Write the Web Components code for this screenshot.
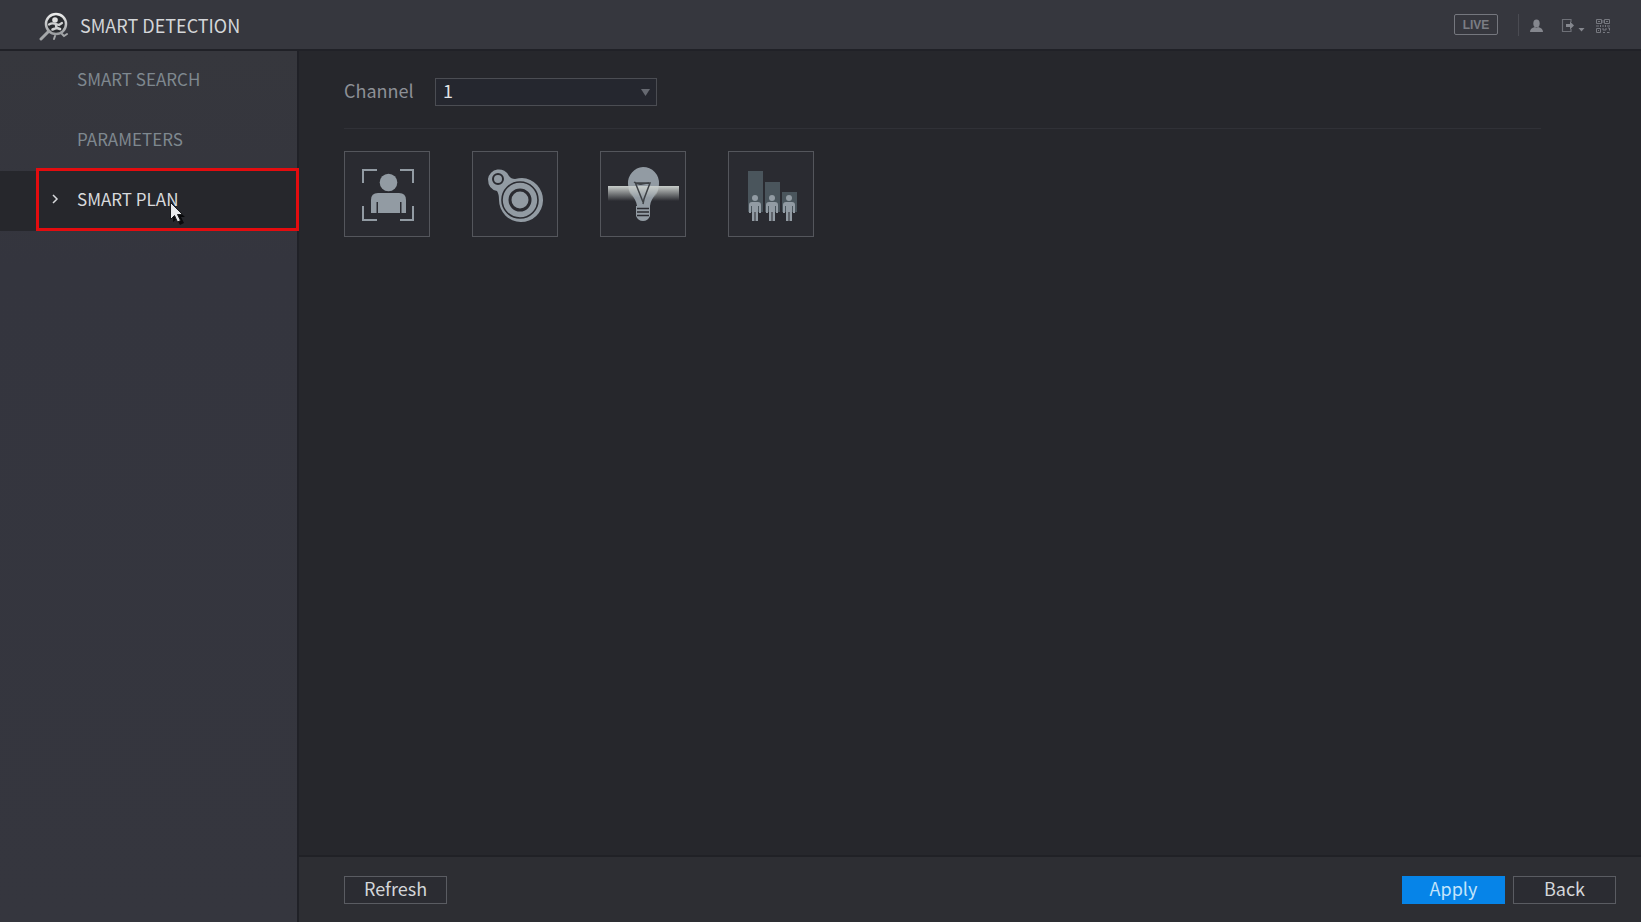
<!DOCTYPE html>
<html lang="en">
<head>
<meta charset="utf-8">
<title>Smart Detection</title>
<style>
  html, body {
    height: 100%;
    margin: 0;
  }
  body {
    background: #26272c;
    color: #d4d6d9;
    font: 18px/26px "Noto Sans CJK SC", "Noto Sans", sans-serif;
    --line: #5a5c62;
    --muted: #7f888f;
    --icon: #929ba3;
  }
</style>
</head>
<body>
<app-shell>
  <app-header slot="header" title-text="SMART DETECTION"></app-header>
  <side-nav slot="nav">
    <nav-item>SMART SEARCH</nav-item>
    <nav-item>PARAMETERS</nav-item>
    <nav-item active>SMART PLAN</nav-item>
  </side-nav>
  <channel-select label="Channel"></channel-select>
  <plan-list>
    <plan-tile type="face" label="Face detection"></plan-tile>
    <plan-tile type="ivs" label="IVS"></plan-tile>
    <plan-tile type="light" label="Video structuring"></plan-tile>
    <plan-tile type="count" label="People counting"></plan-tile>
  </plan-list>
  <app-button slot="footer">Refresh</app-button>
  <app-button slot="footer-end" type="primary">Apply</app-button>
  <app-button slot="footer-end">Back</app-button>
</app-shell>

<script>
const icons = {
  face: `
    <g fill="none" stroke="var(--icon)" stroke-width="2">
      <path d="M19 32V19h14M56 19h13v13M19 55v14h14M56 69h13V55"/>
    </g>
    <circle cx="44.500" cy="31.500" r="8.800"/>
    <path d="M27 62V49q0-7 7-7h21q7 0 7 7v13h-4.500V51h-1.500v11H34V51h-1.500v11z"/>`,
  ivs: `
    <path d="M16 28a11 11 0 0 1 21-3q2 3 6 3 4-1 7-1a22 22 0 1 1-23 22q0-6-2-9-9-2-9-12z"/>
    <g fill="none" stroke="#2a2b31">
      <circle cx="26" cy="28" r="5" stroke-width="2"/>
      <circle cx="48" cy="49" r="18" stroke-width="1.600"/>
      <circle cx="48" cy="49" r="10" stroke-width="3"/>
    </g>`,
  light: `
    <defs>
      <linearGradient id="beam" x1="0" y1="0" x2="0" y2="1">
        <stop offset="0" stop-color="#c9cecb"/>
        <stop offset="1" stop-color="#c9cecb" stop-opacity="0"/>
      </linearGradient>
    </defs>
    <path d="M8 35h71v15H8z" fill="url(#beam)"/>
    <path d="M43 16a16 16 0 0 1 16 17c0 9-8 13-9 22H37c-1-9-9-13-9-22a16 16 0 0 1 15-17z"/>
    <path d="M36 55h14v10q-2 5-7 5t-7-5z"/>
    <path d="M28 35h31q-1 7-5 12H33q-4-5-5-12z" fill="url(#beam)"/>
    <path d="M37 57.500h12M37 61h12M37 64.500h12" stroke="#2a2b31" stroke-width="1.500"/>
    <path d="M34 31q4 3 8 2t8-1l-6 16-1 5M35 31l8 20M35 32h14" fill="none" stroke="#3e4246" stroke-width="1.500"/>`,
  count: `
    <path fill="#4a555c" d="M20 20h15v41H20zM37 31h15v30H37zM54 41h15v20H54z"/>
    ${[27, 44, 61].map(x => `
      <g transform="translate(${x} 0)">
        <circle cy="47" r="3"/>
        <path d="M-6 62v-8q0-3 3-3h6q3 0 3 3v8H4v-7H3v15H.5V61h-1v9H-3V55h-1v7z"/>
      </g>`).join('')}`,
}

class AppShell extends HTMLElement {
  constructor() {
    super()
    this.attachShadow({ mode: 'open' })
    this.shadowRoot.innerHTML = `
      <style>
        :host {
          display: grid;
          grid-template: auto 1fr / 299px 1fr;
          min-height: 100vh;
        }
        header {
          grid-column: 1 / 3;
        }
        nav {
          background: linear-gradient(#36373d, #34353e 25%, #35363e);
          border-right: 2px solid #202127;
          box-sizing: border-box;
        }
        main {
          display: flex;
          flex-direction: column;
          min-width: 0;
        }
        .content {
          flex: 1;
          padding: 27px 100px 27px 45px;
        }
        footer {
          display: flex;
          gap: 8px;
          padding: 19px 25px 18px 45px;
          background: #2d2e33;
          border-top: 2px solid #202126;
        }
        .spacer {
          flex: 1;
        }
      </style>
      <header><slot name="header"></slot></header>
      <nav><slot name="nav"></slot></nav>
      <main>
        <div class="content"><slot></slot></div>
        <footer>
          <slot name="footer"></slot>
          <span class="spacer"></span>
          <slot name="footer-end"></slot>
        </footer>
      </main>
    `
  }
}

class AppHeader extends HTMLElement {
  constructor() {
    super()
    this.attachShadow({ mode: 'open' })
    this.shadowRoot.innerHTML = `
      <style>
        :host {
          display: flex;
          align-items: center;
          height: 49px;
          padding: 0 31px 0 38px;
          background: #36373e;
          border-bottom: 2px solid #202127;
        }
        .logo {
          width: 32px;
          height: 32px;
          margin-right: 10px;
        }
        h1 {
          flex: 1;
          margin: 0;
          font-size: 18px;
          font-weight: 400;
        }
        button {
          display: flex;
          align-items: center;
          padding: 0;
          border: 0;
          background: none;
          color: #7b7d84;
        }
        .live {
          justify-content: center;
          width: 44px;
          height: 21px;
          border: 1px solid #75777e;
          border-radius: 2px;
          font: bold 12px/18px "Liberation Sans", Arial, sans-serif;
        }
        .tools {
          display: flex;
          align-items: center;
          height: 20px;
          margin-left: 20px;
          padding: 2px 0 0 10px;
          border-left: 1px solid #4a4b52;
        }
        .exit {
          margin: 0 11px 0 17px;
        }
      </style>
      <svg class="logo" viewBox="0 0 32 32" aria-hidden="true">
        <defs>
          <linearGradient id="metal" x1="0" y1="0" x2="0" y2="1">
            <stop offset="0" stop-color="#ececec"/>
            <stop offset="1" stop-color="#9b9da0"/>
          </linearGradient>
        </defs>
        <circle cx="18" cy="15" r="10" fill="#292b2f" stroke="url(#metal)" stroke-width="2.500"/>
        <path d="M11 22L3 30" stroke="#a5a7a9" stroke-width="3" stroke-linecap="round"/>
        <circle cx="17" cy="11" r="2.800" fill="#e0e0e0"/>
        <path d="M11 15.500q3-2 7-.5l3 1 3-2" fill="none" stroke="#d0d1d2" stroke-width="2.200" stroke-linecap="round"/>
        <path d="M18 15.500l.5 3.500-4 1.500M19 19l3 1" fill="none" stroke="#d0d1d2" stroke-width="2.600" stroke-linecap="round"/>
        <path d="M17 27l-1 3M24 25l2 2 3-2" fill="none" stroke="#a5a7a9" stroke-width="2" stroke-linecap="round"/>
      </svg>
      <h1>${this.getAttribute('title-text') || ''}</h1>
      <button class="live">LIVE</button>
      <div class="tools">
        <button aria-label="User">
          <svg width="15" height="14" viewBox="0 0 15 14" fill="#85878e">
            <ellipse cx="7.500" cy="4.500" rx="3.200" ry="4"/>
            <path d="M1 13q0-4 5-5l1.500 1L9 8q5 1 5 5z"/>
          </svg>
        </button>
        <button class="exit" aria-label="Log out">
          <svg width="24" height="16" viewBox="0 0 24 16" fill="#85878e">
            <path d="M10 4V1.500H1.500v12H10V11" fill="none" stroke="#6e7077" stroke-width="1.200"/>
            <path d="M5 6h4V3.500L13 7.500l-4 4V9H5zM17.500 10h6l-3 3.500z"/>
          </svg>
        </button>
        <button aria-label="QR code">
          <svg width="14" height="14" viewBox="0 0 14 14" fill="none" stroke="#777980">
            <path d="M.5.5h5v4h-5zM8.500.5h5v4h-5zM.5 9.500h4v4h-4zM2 2.500h2M10 2.500h2M2 11.500h1M0 7h3M4.500 6v2M6 7h2M7 1v3M9.500 6v2M11 7h3M7 9v2h3V9M12 9h1.500v2.500M7 13.500h2M11 13.500h2.500"/>
          </svg>
        </button>
      </div>
    `
  }
}

class SideNav extends HTMLElement {
  constructor() {
    super()
    this.attachShadow({ mode: 'open' })
    this.shadowRoot.innerHTML = `
      <style>
        :host {
          display: flex;
          flex-direction: column;
          font-size: 17px;
        }
      </style>
      <slot></slot>
    `
  }
}

class NavItem extends HTMLElement {
  constructor() {
    super()
    this.attachShadow({ mode: 'open' })
    this.shadowRoot.innerHTML = this.render()
  }

  render() {
    return `
      <style>
        :host {
          display: block;
          position: relative;
        }
        a {
          display: flex;
          align-items: center;
          box-sizing: border-box;
          height: 60px;
          padding: 0 0 4px 50px;
          color: var(--muted);
          text-decoration: none;
        }
        .arrow {
          width: 10px;
          height: 12px;
          margin-right: 17px;
          visibility: hidden;
        }
        :host([active]) a {
          background: #26272c;
          color: #d8dadd;
        }
        :host([active]) .arrow {
          visibility: visible;
        }
        /* marker frame and pointer lie over the active row */
        .frame {
          position: absolute;
          inset: -3px -2px 0 36px;
          border: 3px solid #e30c0f;
          pointer-events: none;
        }
        .pointer {
          position: absolute;
          left: 169px;
          top: 30px;
          width: 18px;
          height: 24px;
          pointer-events: none;
        }
      </style>
      <a href="#">
        <svg class="arrow" viewBox="0 0 10 12" fill="none" stroke="#d8dadd" stroke-width="1.500">
          <path d="M3 2l4 4-4 4"/>
        </svg>
        <slot></slot>
      </a>
      ${this.hasAttribute('active') ? this._buildMarker() : ''}
    `
  }

  _buildMarker() {
    return `
      <div class="frame"></div>
      <svg class="pointer" viewBox="0 0 18 24" aria-hidden="true">
        <path d="M4 5v16l4-3 3 6 4-2-3-6h4z" fill="#08090b"/>
        <path d="M1.500 1.500v17l4-4 3 6.500 3-1.500-3-6h5z" fill="#e9eaec" stroke="#18191c" stroke-width="1"/>
      </svg>
    `
  }
}

class ChannelSelect extends HTMLElement {
  constructor() {
    super()
    this.attachShadow({ mode: 'open' })
    this.shadowRoot.innerHTML = `
      <style>
        :host {
          display: flex;
          align-items: center;
          padding-bottom: 22px;
          border-bottom: 1px solid #303137;
        }
        label {
          width: 91px;
          padding-bottom: 4px;
          color: #8d9096;
          line-height: 24px;
        }
        .box {
          display: grid;
          align-items: center;
          width: 222px;
        }
        select, svg {
          grid-area: 1 / 1;
        }
        select {
          appearance: none;
          height: 28px;
          padding: 0 24px 4px 7px;
          border: 1px solid #4b4d53;
          border-radius: 0;
          background: #25272f;
          color: #e2e4e6;
          font: inherit;
          line-height: 22px;
        }
        svg {
          justify-self: end;
          margin-right: 7px;
          pointer-events: none;
        }
      </style>
      <label for="channel">${this.getAttribute('label')}</label>
      <div class="box">
        <select id="channel">
          <option>1</option>
          <option>2</option>
          <option>3</option>
          <option>4</option>
        </select>
        <svg width="9" height="7" viewBox="0 0 9 7" fill="#666971"><path d="M0 0h9L4.500 7z"/></svg>
      </div>
    `
  }
}

class PlanList extends HTMLElement {
  constructor() {
    super()
    this.attachShadow({ mode: 'open' })
    this.shadowRoot.innerHTML = `
      <style>
        :host {
          display: flex;
          flex-wrap: wrap;
          gap: 42px;
          margin-top: 22px;
        }
      </style>
      <slot></slot>
    `
  }
}

class PlanTile extends HTMLElement {
  constructor() {
    super()
    this.attachShadow({ mode: 'open' })
    this.shadowRoot.innerHTML = `
      <style>
        :host {
          display: block;
        }
        button {
          display: block;
          padding: 0;
          border: 1px solid #54565c;
          background: #2a2b31;
        }
        svg {
          display: block;
          width: 84px;
          height: 84px;
          fill: var(--icon);
        }
      </style>
      <button aria-label="${this.getAttribute('label')}">
        <svg viewBox="1 1 84 84">${icons[this.getAttribute('type')]}</svg>
      </button>
    `
  }
}

class AppButton extends HTMLElement {
  constructor() {
    super()
    this.attachShadow({ mode: 'open' })
    this.shadowRoot.innerHTML = `
      <style>
        :host {
          display: block;
        }
        button {
          display: block;
          width: 103px;
          height: 28px;
          padding: 0 0 3px;
          border: 1px solid var(--line);
          background: #2b2c32;
          color: #d4d6d9;
          font: inherit;
          line-height: 23px;
        }
        :host([type="primary"]) button {
          border-color: #0684e8;
          background: #0684e8;
          color: #c4e4fb;
        }
      </style>
      <button><slot></slot></button>
    `
  }
}

customElements.define('app-shell', AppShell)
customElements.define('app-header', AppHeader)
customElements.define('side-nav', SideNav)
customElements.define('nav-item', NavItem)
customElements.define('channel-select', ChannelSelect)
customElements.define('plan-list', PlanList)
customElements.define('plan-tile', PlanTile)
customElements.define('app-button', AppButton)
</script>
</body>
</html>
